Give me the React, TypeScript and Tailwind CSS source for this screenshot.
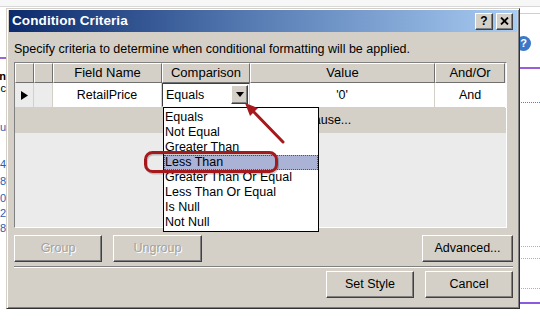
import { ReactNode } from 'react'

const raised =
  'border border-t-white border-l-white border-r-[#404040] border-b-[#404040] shadow-[inset_-1px_-1px_0_#808080]'

function WinButton({ label, width, disabled }: { label: string; width: string; disabled?: boolean }) {
  return (
    <div
      className={`${width} h-[27px] bg-[#d4d0c8] ${raised} flex items-center justify-center text-[12.5px] ${
        disabled ? 'text-[#a3a19c] [text-shadow:1px_1px_0_#ffffff]' : 'text-black'
      }`}
    >
      {label}
    </div>
  )
}

function HeadCell({ width, children }: { width: string; children?: ReactNode }) {
  return (
    <div
      className={`${width} h-[20px] shrink-0 bg-[#d4d0c8] border border-t-white border-l-white border-r-[#707070] border-b-[#707070] flex items-center justify-center text-[13px]`}
    >
      {children}
    </div>
  )
}

export default function App() {
  const options = [
    'Equals',
    'Not Equal',
    'Greater Than',
    'Less Than',
    'Greater Than Or Equal',
    'Less Than Or Equal',
    'Is Null',
    'Not Null'
  ]

  return (
    <div className="relative w-[540px] h-[322px] overflow-hidden bg-white font-['Liberation_Sans',Arial,sans-serif] text-black">
      {/* app behind the dialog */}
      <div className="h-[7px] bg-[#f7f7f7] border-b border-[#d8d8d8]" />
      <div className="flex h-[315px]">
        <div className="w-[6px] flex flex-col items-end text-[11px] leading-none text-[#2a5db0]">
          <div className="mt-[50px] w-[6px] h-[13px] border-y border-[#9a66d0]" />
          <div className="mt-[12px] font-bold text-black">n</div>
          <div className="mt-[1px] text-black">c</div>
          <div className="mt-[28px]">u</div>
          <div className="mt-[26px]">4</div>
          <div className="mt-[6px]">8</div>
          <div className="mt-[6px]">0</div>
          <div className="mt-[4px]">2</div>
          <div className="mt-[4px]">8</div>
          <div className="mt-[88px] w-[6px] h-[2px] bg-[#9a66d0]" />
        </div>
        <div className="flex-1" />
        <div className="w-[22px] flex flex-col">
          <div className="mt-[6px] h-px bg-[#d0d0d0]" />
          <div className="mt-[22px] ml-[-2px] w-[15px] h-[15px] rounded-full bg-[#3a78c8] text-white text-[11px] font-bold flex items-center justify-center">
            ?
          </div>
          <div className="mt-[16px] h-[2px] bg-[#9a5fd8]" />
          <div className="mt-[33px] border-t border-dotted border-[#6080b0]" />
          <div className="mt-[143px] border-t border-dotted border-[#b0b0b0]" />
          <div className="mt-[11px] border-t border-dotted border-[#b0b0b0]" />
          <div className="mt-[29px] border-t border-dotted border-[#b0b0b0]" />
          <div className="mt-[13px] h-[2px] bg-[#8a5ae0]" />
        </div>
      </div>

      {/* dialog window */}
      <div className="absolute left-[6px] top-[8px] w-[514px] h-[301px] bg-[#d4d0c8] border border-t-[#d4d0c8] border-l-[#d4d0c8] border-r-[#303030] border-b-[#303030] shadow-[inset_1px_1px_0_#ffffff,inset_-1px_-1px_0_#808080] p-[2px] pt-[1px] flex flex-col">
        <div className="h-[22px] bg-gradient-to-r from-[#0c2a6c] via-[#5a7fb6] to-[#a9ccf2] flex items-center pl-[3px] pr-[4px]">
          <span className="text-white font-bold text-[13.5px] tracking-[0.1px]">Condition Criteria</span>
          <div className="ml-auto flex gap-[3px]">
            <div className={`w-[18px] h-[17px] bg-[#d4d0c8] ${raised} flex items-center justify-center text-[12px] font-bold leading-none`}>
              ?
            </div>
            <div className={`w-[17px] h-[17px] bg-[#d4d0c8] ${raised} flex items-center justify-center`}>
              <svg width="9" height="8" viewBox="0 0 9 8">
                <path d="M1 0.5 L8 7.5 M8 0.5 L1 7.5" stroke="#000" strokeWidth="1.8" />
              </svg>
            </div>
          </div>
        </div>

        <div className="px-[5px] flex flex-col">
          <div className="mt-[10px] h-[14px] leading-[14px] text-[12.5px]">
            Specify criteria to determine when conditional formatting will be applied.
          </div>

          {/* grid */}
          <div className="mt-[6px] w-[493px] h-[166px] border border-t-[#808080] border-l-[#808080] border-r-white border-b-white bg-[#ebebeb] flex flex-col">
            <div className="flex">
              <HeadCell width="w-[19px]" />
              <HeadCell width="w-[19px]" />
              <HeadCell width="w-[109px]">Field Name</HeadCell>
              <HeadCell width="w-[88px]">Comparison</HeadCell>
              <HeadCell width="w-[185px]">Value</HeadCell>
              <HeadCell width="w-[70px]">And/Or</HeadCell>
            </div>
            <div className="flex h-[25px] text-[12.5px] bg-white">
              <div className="w-[19px] bg-[#ececec] border-r border-b border-[#d4d0c8] flex items-center justify-center">
                <svg width="7" height="9" viewBox="0 0 7 9">
                  <polygon points="0,0 7,4.5 0,9" fill="#000" />
                </svg>
              </div>
              <div className="w-[19px] bg-[#ececec] border-r border-b border-[#d4d0c8]" />
              <div className="w-[109px] border-r border-b border-[#d4d0c8] flex items-center justify-center">RetailPrice</div>
              <div className="w-[88px] border-b border-[#d4d0c8] flex">
                <div className="flex-1 flex items-start border border-t-[#404040] border-l-[#404040] border-r-[#d4d0c8] border-b-white">
                  <span className="pl-[3px] pt-[2px]">Equals</span>
                  <div className={`ml-auto mt-[1px] mr-[1px] w-[17px] h-[19px] bg-[#d4d0c8] ${raised} flex items-center justify-center`}>
                    <svg width="8" height="5" viewBox="0 0 8 5">
                      <polygon points="0,0 8,0 4,5" fill="#000" />
                    </svg>
                  </div>
                </div>
              </div>
              <div className="w-[185px] border-r border-b border-[#d4d0c8] flex items-center justify-center">'0'</div>
              <div className="w-[70px] border-b border-[#d4d0c8] flex items-center justify-center">And</div>
            </div>
            <div className="h-[25px] bg-[#d4d0c8] flex items-center pl-[182px] text-[12.5px]">
              Click here to add a clause...
            </div>
          </div>

          <div className="mt-[7px] flex">
            <WinButton label="Group" width="w-[88px]" disabled />
            <div className="ml-[11px]">
              <WinButton label="Ungroup" width="w-[89px]" disabled />
            </div>
            <div className="ml-auto mr-[-1px]">
              <WinButton label="Advanced..." width="w-[91px]" />
            </div>
          </div>

          <div className="mt-[4px] mr-[-1px] h-[2px] border-t border-b border-t-[#808080] border-b-white" />

          <div className="mt-[3px] flex justify-end gap-[11px] mr-[-1px]">
            <WinButton label="Set Style" width="w-[88px]" />
            <WinButton label="Cancel" width="w-[88px]" />
          </div>
        </div>
      </div>

      {/* open comparison dropdown */}
      <div className="absolute left-[163px] top-[107px] w-[156px] h-[125px] bg-white border border-black pt-[2px] text-[12.5px]">
        {options.map((o) => (
          <div
            key={o}
            className={`h-[15px] leading-[15px] pl-[1px] whitespace-nowrap ${
              o === 'Less Than' ? 'bg-[#aab3d6] outline-1 outline-dotted outline-[#555] -outline-offset-1' : ''
            }`}
          >
            {o}
          </div>
        ))}
      </div>

      {/* annotation */}
      <svg className="absolute inset-0 pointer-events-none" width="540" height="322" viewBox="0 0 540 322">
        <rect x="145.5" y="152.5" width="131" height="19" rx="7" fill="none" stroke="#00000033" strokeWidth="3" transform="translate(1,1.5)" />
        <rect x="145.5" y="152.5" width="131" height="19" rx="7" fill="none" stroke="#a5191d" strokeWidth="3" />
        <line x1="283" y1="142" x2="252" y2="110" stroke="#a5191d" strokeWidth="3" strokeLinecap="round" />
        <polygon points="245,103 258,108 250,116" fill="#a5191d" />
      </svg>
    </div>
  )
}
